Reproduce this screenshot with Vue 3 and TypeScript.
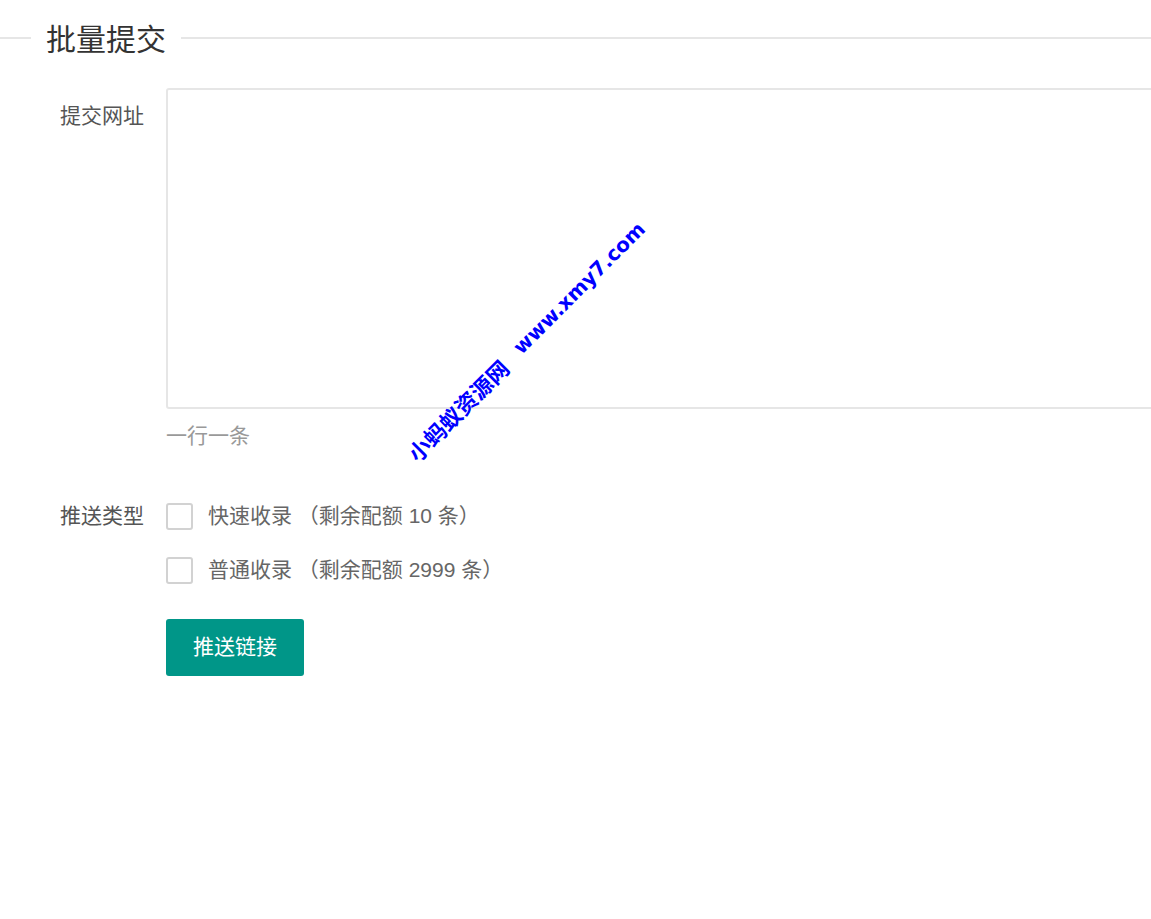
<script setup lang="ts">
import { ref } from 'vue'

const urls = ref('')
const types = ref([
  { name: '快速收录', quota: 10, checked: false },
  { name: '普通收录', quota: 2999, checked: false },
])
</script>

<template>
  <div class="page">
    <div class="title-row">
      <span class="title">批量提交</span>
    </div>

    <form class="form" @submit.prevent>
      <div class="form-row row-urls">
        <label class="form-label">提交网址</label>
        <div class="form-body">
          <textarea v-model="urls" class="urls"></textarea>
          <div class="hint">一行一条</div>
        </div>
      </div>

      <div class="form-row row-types">
        <label class="form-label">推送类型</label>
        <div class="form-body type-list">
          <label v-for="t in types" :key="t.name" class="type-item">
            <input v-model="t.checked" type="checkbox" class="check" />
            <span class="type-text">{{ t.name }} （剩余配额 {{ t.quota }} 条）</span>
          </label>
        </div>
      </div>

      <div class="form-row row-submit">
        <div class="form-label"></div>
        <div class="form-body">
          <button type="submit" class="submit">推送链接</button>
        </div>
      </div>
    </form>

    <div class="watermark"><span class="wm-cn">小蚂蚁资源网</span><span class="wm-en">www.xmy7.com</span></div>
  </div>
</template>

<style>
html, body { background: #fff; overflow: hidden; }
</style>

<style scoped>
.page {
  position: relative;
  width: 1151px; height: 919px;
  overflow: hidden;
  font-family: "Liberation Sans", "Noto Sans CJK SC", sans-serif;
  font-size: 21px;
  color: #666;
  background: #fff;
}
.title-row {
  display: flex; align-items: center;
  height: 52px; padding-top: 12px;
  box-sizing: content-box;
}
.title-row::before {
  content: ""; width: 31px; height: 2px; background: #e6e6e6;
}
.title-row::after {
  content: ""; flex: 1; height: 2px; background: #e6e6e6;
}
.title {
  padding: 4px 15px 0;
  font-size: 30px; line-height: 48px;
  color: #333;
}
.form { padding-top: 24px; }
.form-row { display: flex; }
.form-label {
  width: 144px; flex: none;
  margin-right: 22px;
  text-align: right;
  color: #555;
  line-height: 32px;
  padding-top: 12px;
  box-sizing: content-box;
}
.form-body { flex: none; width: 1100px; }
.urls {
  display: block;
  width: 100%; height: 321px;
  box-sizing: border-box;
  border: 2px solid #e6e6e6; border-radius: 3px;
  background: #fff;
  outline: none; resize: none;
}
.hint {
  margin-top: 11px;
  line-height: 32px;
  color: #999;
}
.row-types { margin-top: 51px; }
.row-types .form-label { padding-top: 0; margin-top: -3px; line-height: 32px; }
.type-list { display: flex; flex-direction: column; gap: 27px; }
.type-item { display: flex; align-items: center; height: 27px; cursor: pointer; }
.check {
  appearance: none;
  width: 27px; height: 27px;
  margin: 0 15px 0 0;
  box-sizing: border-box;
  border: 2px solid #d2d2d2; border-radius: 3px;
  background: #fff;
}
.type-text { line-height: 32px; margin-top: -2px; white-space: pre; }
.row-submit { margin-top: 35px; }
.row-submit .form-label { padding-top: 0; }
.submit {
  display: block;
  width: 138px; height: 57px;
  padding: 0 0 6px;
  border: 0; border-radius: 3px;
  background: #009688;
  color: #fff;
  font: inherit;
  cursor: pointer;
}
.watermark {
  position: absolute;
  left: 526px; top: 341px;
  display: flex; align-items: center; gap: 18px;
  transform: translate(-50%, -50%) rotate(-45deg);
  white-space: nowrap;
  color: #0000ff;
  font-weight: 700;
  line-height: 28px;
}
.wm-cn { font-family: "Noto Sans CJK SC", sans-serif; font-size: 22px; }
.wm-en { font-family: "DejaVu Sans", sans-serif; font-size: 20px; }
</style>
